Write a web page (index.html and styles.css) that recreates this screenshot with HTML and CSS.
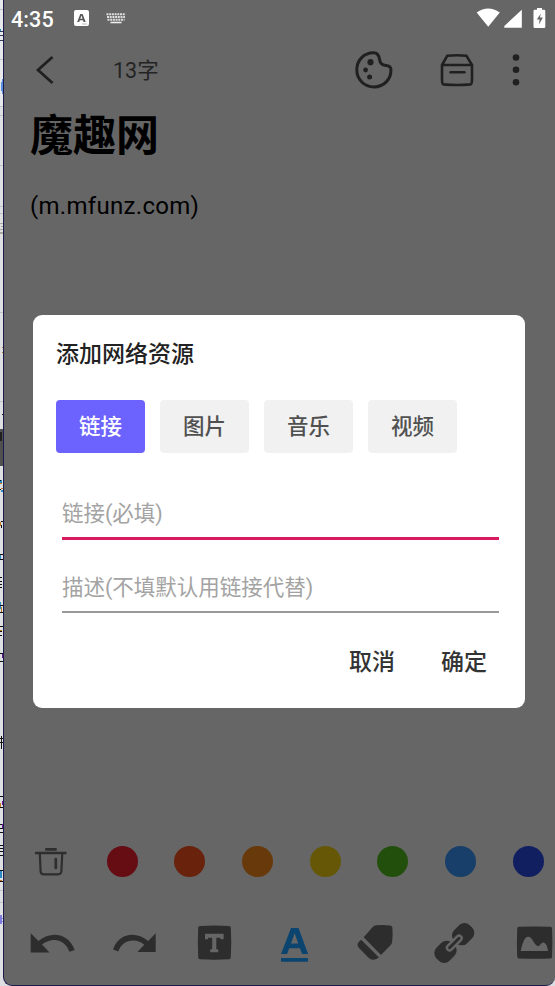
FILE: index.html
```
<!DOCTYPE html>
<html lang="zh-CN">
<head>
<meta charset="utf-8">
<title>添加网络资源</title>
<link rel="stylesheet" href="styles.css">
</head>
<body>
<div class="desktop">
  <svg class="desktop-edge" viewBox="0 0 3 986" width="3" height="986" shape-rendering="crispEdges">
    <path fill="#e6e8ec" d="M0 0h3v106H0z"/>
    <path fill="#bfc1c5" d="M0 9h3v1H0zM0 59h3v1H0zM0 106h3v1H0zM0 115h3v1H0zM0 165h3v1H0zM0 206h3v1H0zM0 213h3v1H0zM0 312h3v1H0zM0 401h3v1H0zM0 890h3v1H0zM0 902h3v1H0z"/>
    <path fill="#343d58" d="M0 31h3v1H0zM0 35h3v1H0zM0 40h3v1H0z"/>
    <path fill="#298ac4" d="M0 29h1v2H0zM0 480h2v3H0zM1 490h2v2H1zM0 554h1v5H0zM0 602h1v7H0zM0 870h2v8H0z"/>
    <path fill="#5a8fe0" d="M2 79h1v3H2zM1 82h2v9H1zM2 91h1v3H2z"/>
    <path fill="#aaa6a0" d="M0 223h3v1H0zM1 226h2v1H1zM0 229h3v1H0zM0 232h3v2H0z"/>
    <path fill="#c17a20" d="M2 347h1v1H2zM2 352h1v1H2zM0 483h2v1H0zM1 488h2v1H1zM0 522h1v4H0zM1 607h1v6H1zM0 630h2v2H0zM0 803h1v4H0zM0 880h2v1H0z"/>
    <path fill="#505050" d="M0 429h3v37H0z"/>
    <path fill="#202020" d="M0 432h2v9H0zM2 414h1v1H2z"/>
    <path fill="#111" d="M0 480h1v1H0zM0 489h1v1H0zM1 521h2v1H1zM1 525h1v3H1zM0 554h3v1H0zM0 559h3v1H0zM0 577h2v1H0zM0 581h2v1H0zM0 584h2v1H0zM0 587h2v1H0zM0 605h3v1H0zM0 612h3v1H0zM0 626h3v1H0zM0 631h2v1H0zM0 635h2v1H0zM0 653h3v1H0zM0 661h3v1H0zM1 736h1v13H1zM0 738h3v1H0zM0 742h3v1H0zM0 796h3v1H0zM0 807h3v1H0zM0 824h3v1H0zM0 828h3v1H0zM0 832h3v1H0zM0 845h3v1H0zM0 848h3v1H0zM0 851h3v1H0zM0 855h3v1H0zM0 870h3v1H0zM0 881h3v1H0z"/>
    <path fill="#6b199a" d="M2 654h1v4H2zM2 801h1v4H2zM2 824h1v4H2z"/>
    <path fill="#817bdd" d="M0 915h2v9H0zM2 918h1v1H2zM2 921h1v1H2z"/>
  </svg>
  <div class="phone">
    <header class="status">
      <span class="clock">4:35</span>
      <svg class="badge" width="15" height="16" viewBox="0 0 15 16"><rect width="15" height="16" rx="2" fill="#fff"/><path d="M3.2 12 6.3 4h2.3l3.1 8H9.6L9 10.2H5.8L5.2 12zM6.3 8.7h2.3L7.45 5.4z" fill="#555"/><path d="M8 14h5" stroke="#aaa" stroke-width=".8"/></svg>
      <svg class="keyboard" width="20" height="12" viewBox="0 0 20 12"><path d="M.5 1.2h19M1 4h18M1.5 6.8h17" stroke="#ddd" stroke-width="2" stroke-dasharray="2 .7"/><path d="M4.5 9.5h11" stroke="#eee" stroke-width="1.6"/></svg>
      <svg class="signals" width="70" height="21" viewBox="0 0 70 21" fill="#fff"><path d="M.7 4.5Q12-3.3 23.8 4.5L12.2 18.8z"/><path d="M28.3 19.7V18L45.8 1.8v17.9z"/><path fill-rule="evenodd" d="M61 1.8V0h5v1.8h2q1.3 0 1.3 1.3v15.6q0 1.2-1.3 1.2h-9.2q-1.3 0-1.3-1.2V3.1q0-1.3 1.3-1.3zm3.8 3.7-4 6.1h2.8l-.7 5 4-7h-3z"/></svg>
    </header>
    <nav class="topbar">
      <svg class="back" width="20" height="32" viewBox="0 0 20 32"><path d="M17.5 3 3 16l14.5 13" fill="none" stroke="#202020" stroke-width="2.8"/></svg>
      <span class="count">13字</span>
      <svg class="palette" width="38" height="38" viewBox="0 0 38 38"><path d="M18.5 1.8C8.5 1.8 1.8 9.6 1.8 18.8c0 9.7 7.5 17.1 17.1 17.1 10 0 18-8 16.9-18.2-.3-3.2-3.3-3-6.2-3.5-3.2-.6-4.5-2.4-4.9-5.2-.5-3.8-1.5-7.2-6.2-7.2z" fill="none" stroke="#202020" stroke-width="3"/><g fill="#202020"><circle cx="15.5" cy="11.2" r="3.1"/><circle cx="10.6" cy="19" r="2.4"/><circle cx="14.6" cy="26" r="2.5"/></g></svg>
      <svg class="archive" width="34" height="34" viewBox="0 0 34 34" fill="none" stroke="#202020" stroke-width="2.6" stroke-linejoin="round"><path d="M2 12 7.2 2.8Q17 1.6 26.5 2.8L32 12v14q0 5-1.5 5.4-13.5 1.2-27 0Q2 31 2 26zM2 12h30"/><path d="M10.5 19.2h14" stroke-linecap="round" stroke-width="2.4"/></svg>
      <svg class="more" width="8" height="34" viewBox="0 0 8 34" fill="#202020"><circle cx="4" cy="4.5" r="3.3"/><circle cx="4" cy="16.8" r="3.3"/><circle cx="4" cy="29.2" r="3.3"/></svg>
    </nav>
    <main class="note">
      <h1>魔趣网</h1>
      <p>(m.mfunz.com)</p>
    </main>
    <div class="colors">
      <svg class="trash" width="32" height="30" viewBox="0 0 32 30" fill="none" stroke="#2e2e2e"><path d="M10.2 3.4h11.5" stroke-width="2.8"/><path d="M0 7h31.5" stroke-width="2.5"/><path d="M4.8 7l.8 18.3q.3 3 3.2 3h14.4q3 0 3.2-3L27.3 7" stroke-width="2.2"/><path d="M20.8 13v9" stroke-width="2.7" stroke-linecap="round"/></svg>
      <i class="dot red"></i><i class="dot vermilion"></i><i class="dot orange"></i><i class="dot yellow"></i><i class="dot green"></i><i class="dot sky"></i><i class="dot blue"></i>
    </div>
    <svg class="tools" width="530" height="44" viewBox="26 920 530 44" fill="#2d2d2d">
      <path d="M30.7 933.3v19.2h18.8L42 944.6c10.5-8.4 23-5.2 27.5 7.2l5.2-1.8c-5.7-16.5-23.1-20.1-36.2-8.9z"/>
      <path d="M155.7 933.3v18.6h-18.3l6.9-7.2c-9.3-7.6-22.4-4.5-26 6.9l-5.2-2c5.2-15.7 22.1-19.3 35-8.6z"/>
      <path fill-rule="evenodd" d="M200 926q14.5-.8 29 0 1.8 0 1.8 1.8 1 14.7 0 29.5 0 2-1.8 2-14.5.8-29 0-1.8 0-1.8-2-.8-14.8 0-29.5 0-1.8 1.8-1.8zm5 7.8v5.5h3.1v-1.6h4.1v11.5h-2v3h8.1v-3h-2v-11.5h4.1v1.6h3.2v-5.5z"/>
      <path fill="#0c4470" fill-rule="evenodd" d="m281 954 10-26h7.5l9.6 26h-6l-2.2-5.8h-10.6L287 954zm10-10.4h7.2l-3.5-10.3zM281 958h27v3.7h-27z"/>
      <g transform="translate(356 924)"><path d="M7.7 13.2 16.5 3.2Q18 1.4 20.5 1.3q7-.6 13.8.3 2 .2 2.1 2.1.6 7.5-.3 14.5-.3 2-1.8 3.2L25 31z"/><path d="M5.2 15.8 23 33.5q-6.3 4.3-10.2.5L3 24q-3.8-4 2.2-8.2z"/></g>
      <g transform="translate(454.3 943) rotate(-45)"><rect x="-23.5" y="-9.2" width="22" height="18.4" rx="7.5"/><rect x="1.5" y="-9.2" width="22" height="18.4" rx="7.5"/><rect x="-10.5" y="-3.8" width="21" height="7.6" rx="3.8" fill="#666"/><rect x="-8.2" y="-1.5" width="16.4" height="3" rx="1.5"/></g>
      <path fill-rule="evenodd" d="M519 926.7q16-.6 31.5 0 1.5 0 1.5 1.5.8 14 0 28.5 0 1.8-1.5 1.8-15.7.6-31.5 0-1.8 0-1.8-1.8-.6-14 0-28.5 0-1.5 1.8-1.5zm1.7 24.4H548c-.5-5-2-7.7-4.3-8.5-3-.5-3.4 4.4-6.2 3.5-3.5-1.3-5.2-9.3-9.2-9.3-4.3 0-6 7.7-7.6 14.3z"/>
    </svg>
  </div>
  <section class="dialog" role="dialog">
    <h2>添加网络资源</h2>
    <div class="tabs">
      <button class="tab active">链接</button><button class="tab">图片</button><button class="tab">音乐</button><button class="tab">视频</button>
    </div>
    <div class="field focused">链接(必填)</div>
    <div class="field">描述(不填默认用链接代替)</div>
    <div class="actions"><button>取消</button><button>确定</button></div>
  </section>
</div>
</body>
</html>
```
FILE: styles.css
```
* { box-sizing: border-box; }
body, h1, h2, p { margin: 0; }
body { font-family: Roboto, "Noto Sans CJK SC", sans-serif; overflow: hidden; }
svg { display: block; flex: none; }
button { border: 0; padding: 0; background: none; font: inherit; color: inherit; }

.desktop { position: relative; display: flex; width: 555px; height: 986px; background: #dedfe1; overflow: hidden; }
.phone {
  flex: 1; display: flex; flex-direction: column; min-width: 0; height: 986px;
  background: #666; border-left: 1px solid #1b1b4e; border-bottom: 1px solid #1b1b4e;
  border-radius: 0 0 9px 9px; overflow: hidden;
}
.status { display: flex; height: 40px; padding-left: 7px; align-items: flex-start; color: #fff; }
.clock { width: 63px; padding-top: 6px; font-size: 21.5px; line-height: 27px; font-weight: 500; letter-spacing: .1px; }
.badge { margin-top: 10px; }
.keyboard { margin: 13px 0 0 17px; }
.signals { margin: 8px 9px 0 auto; }

.topbar { display: flex; height: 60px; align-items: center; padding-left: 31px; }
.back, .palette, .archive { margin-bottom: 1px; }
.count { width: 242px; margin-left: 58px; padding-top: 1px; font-size: 21.5px; line-height: 30px; color: #242424; }
.archive { margin-left: 47px; }
.more { margin-left: 38px; }

.note { flex: 1; padding-left: 26px; color: #000; }
.note h1 { height: 74px; padding-top: 5px; font-size: 43px; line-height: 62px; font-weight: 700; }
.note p { padding-top: 16px; font-size: 24px; line-height: 32px; letter-spacing: .3px; }

.colors { display: flex; height: 32px; align-items: center; padding-left: 31px; margin-bottom: 43px; }
.dot { flex: none; width: 31px; height: 31px; margin-left: 36.7px; border-radius: 50%; }
.trash + .dot { margin-left: 39.5px; }
.red { background: #650d13; }
.vermilion { background: #69230d; }
.orange { background: #68390a; }
.yellow { background: #665707; }
.green { background: #22500c; }
.sky { background: #173f69; }
.blue { background: #111f61; }
.tools { margin: 0 0 21px 22px; }

.dialog {
  position: absolute; left: 33px; top: 315px; width: 492px; height: 393px;
  padding: 23px 26px 0 23px; background: #fff; border-radius: 9px; color: #222;
}
.dialog h2 { height: 62px; font-size: 23px; line-height: 34px; font-weight: 500; }
.tabs { display: flex; gap: 15px; }
.tab { width: 89px; height: 53px; padding-top: 1px; border-radius: 4px; background: #f1f1f1; color: #505050; font-size: 21.5px; font-weight: 500; line-height: 52px; }
.tab.active { background: #6c63ff; color: #fff; }
.field { height: 73px; margin-left: 6px; padding-top: 32px; border-bottom: 2px solid #999; color: #a3a3a3; font-size: 21.5px; line-height: 32px; font-weight: 400; }
.field.focused { height: 87px; padding-top: 45px; border-bottom: 3px solid #d81b60; }
.actions { display: flex; justify-content: flex-end; gap: 46px; padding: 33px 12px 0 0; color: #333; font-size: 23px; line-height: 34px; font-weight: 500; }
```
